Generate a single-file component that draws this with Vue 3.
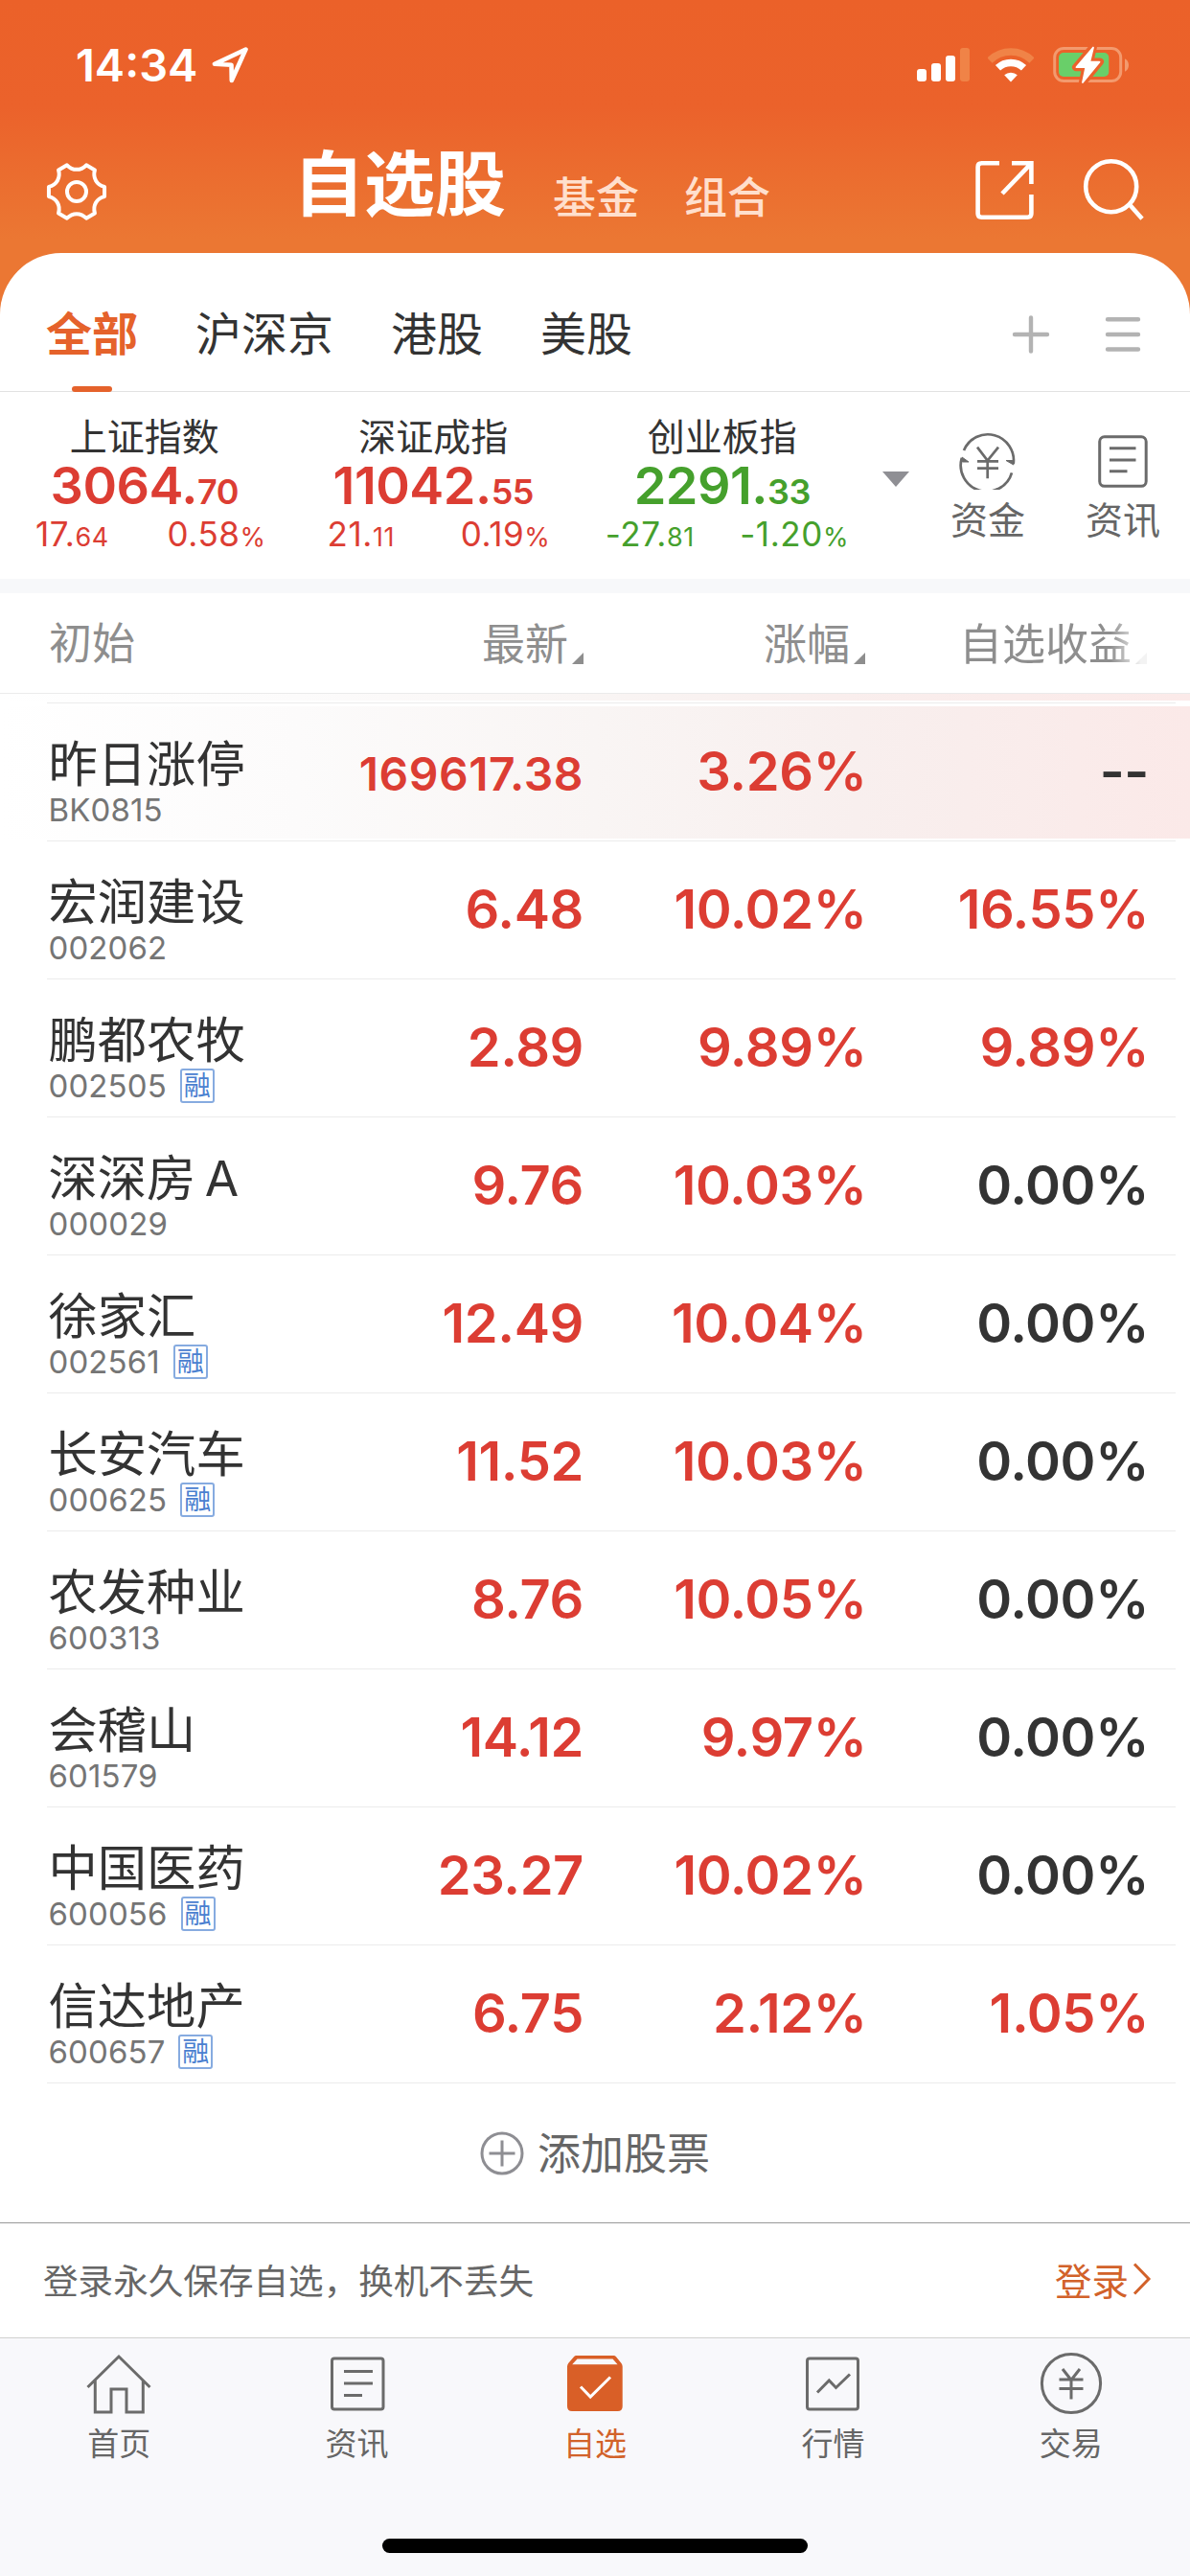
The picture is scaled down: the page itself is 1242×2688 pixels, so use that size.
<script setup>
const markets = ['全部', '沪深京', '港股', '美股']

const indices = [
  { name: '上证指数', int: '3064.', dec: '70', chg: '17.', chgDec: '64', pct: '0.58', tone: 'up' },
  { name: '深证成指', int: '11042.', dec: '55', chg: '21.', chgDec: '11', pct: '0.19', tone: 'up' },
  { name: '创业板指', int: '2291.', dec: '33', chg: '-27.', chgDec: '81', pct: '-1.20', tone: 'down' },
]

const stocks = [
  { name: '昨日涨停', code: 'BK0815', price: '169617.38', pct: '3.26%', gain: '--', hot: true },
  { name: '宏润建设', code: '002062', price: '6.48', pct: '10.02%', gain: '16.55%' },
  { name: '鹏都农牧', code: '002505', margin: true, price: '2.89', pct: '9.89%', gain: '9.89%' },
  { name: '深深房 A', code: '000029', price: '9.76', pct: '10.03%', gain: '0.00%' },
  { name: '徐家汇', code: '002561', margin: true, price: '12.49', pct: '10.04%', gain: '0.00%' },
  { name: '长安汽车', code: '000625', margin: true, price: '11.52', pct: '10.03%', gain: '0.00%' },
  { name: '农发种业', code: '600313', price: '8.76', pct: '10.05%', gain: '0.00%' },
  { name: '会稽山', code: '601579', price: '14.12', pct: '9.97%', gain: '0.00%' },
  { name: '中国医药', code: '600056', margin: true, price: '23.27', pct: '10.02%', gain: '0.00%' },
  { name: '信达地产', code: '600657', margin: true, price: '6.75', pct: '2.12%', gain: '1.05%' },
]

const isFlat = (v) => v === '--' || v === '0.00%'

// Six-toothed gear outline: two rim points per tooth, a concave curve between teeth.
const polar = (deg, r) => {
  const a = (deg * Math.PI) / 180
  return `${(33 + r * Math.cos(a)).toFixed(2)} ${(33 + r * Math.sin(a)).toFixed(2)}`
}
let gear = `M${polar(-10, 29.5)}`
for (let t = 0; t < 360; t += 60) {
  gear += `L${polar(t + 10, 29.5)}C${polar(t + 19, 22)} ${polar(t + 41, 22)} ${polar(t + 50, 29.5)}`
}
gear += 'Z'
</script>

<template>
  <div class="screen">
    <header class="top">
      <div class="status">
        <span class="time">14:34</span>
        <svg class="loc" width="44" height="44" viewBox="0 0 44 44" fill="none" stroke="#fff" stroke-width="4.6" stroke-linejoin="round">
          <path d="M37.5 5.500L5 20.800L22.500 21.800L22.800 38Z" />
        </svg>
        <svg class="signal" width="56" height="36" viewBox="0 0 56 36" fill="#fff">
          <rect x="0" y="22" width="10" height="13" rx="3" />
          <rect x="15" y="16" width="10" height="19" rx="3" />
          <rect x="30" y="8" width="10" height="27" rx="3" />
          <rect x="45" y="0" width="10" height="35" rx="3" fill="#f08347" />
        </svg>
        <svg class="wifi" width="48" height="36" viewBox="0 0 48 36" fill="none" stroke-width="7.500">
          <path d="M2 13A31.200 31.200 0 0 1 46 13" stroke="#f08347" />
          <path d="M10.500 20.800A19.600 19.600 0 0 1 37.500 20.800" stroke="#fff" />
          <path d="M24 35.500L17.200 28.300A10 10 0 0 1 30.800 28.300Z" fill="#fff" />
        </svg>
        <svg class="battery" width="80" height="44" viewBox="0 0 80 44">
          <rect x="1.700" y="4.500" width="69" height="34" rx="9.500" fill="none" stroke="#f39a6e" stroke-width="3" />
          <path d="M75 15.200Q79 17.500 79 22T75 28.700Z" fill="#f39a6e" />
          <rect x="6" y="9" width="52.300" height="25" rx="5" fill="#69cf69" />
          <path d="M42 2.800L24 24.200H34.300L30.800 40.500L49 18.400H38.300Z" fill="#eb622b" stroke="#eb622b" stroke-width="8" stroke-linejoin="round" />
          <path d="M42 3.500L24.500 24.200H34.300L31 40L48.500 18.600H38.300Z" fill="#fff" stroke="#fff" stroke-width="1.800" stroke-linejoin="round" />
        </svg>
      </div>
      <nav class="nav">
        <svg class="gear" width="66" height="66" viewBox="0 0 66 66" fill="none" stroke="#fff" stroke-width="4" stroke-linejoin="round">
          <path :d="gear" />
          <circle cx="33" cy="33" r="10" />
        </svg>
        <h1 class="title">自选股</h1>
        <span class="sub">基金</span>
        <span class="sub">组合</span>
        <svg class="export" width="62" height="62" viewBox="0 0 62 62" fill="none" stroke="#fff" stroke-width="4.600">
          <path d="M25 3.300H6.500Q2.600 3.300 2.600 7.200V55.800Q2.600 59.700 6.500 59.700H54.500Q58.400 59.700 58.400 55.800V36M38 3.300H58.400V25M58.400 3.300L28 35" />
        </svg>
        <svg class="search" width="64" height="66" viewBox="0 0 64 66" fill="none" stroke="#fff" stroke-width="4.600">
          <circle cx="29.700" cy="29.700" r="26.500" />
          <path d="M48.500 48L62 63.200" />
        </svg>
      </nav>
    </header>

    <main class="card">
      <div class="tabs">
        <span v-for="(m, i) in markets" :key="m" class="tab" :class="{ active: i === 0 }">{{ m }}</span>
        <svg class="tools" width="136" height="42" viewBox="0 0 136 42" stroke="#b3b3b3" stroke-width="4.400" stroke-linecap="round">
          <path d="M4 21H38M21 3.500V38.500M101 5.200H133M101 21H133M101 36.500H133" />
        </svg>
      </div>

      <section class="indices">
        <div v-for="x in indices" :key="x.name" class="index" :class="x.tone">
          <div class="iname">{{ x.name }}</div>
          <div class="ivalue">{{ x.int }}<small>{{ x.dec }}</small></div>
          <div class="ichange">
            <span>{{ x.chg }}<small>{{ x.chgDec }}</small></span>
            <span>{{ x.pct }}<small>%</small></span>
          </div>
        </div>
        <svg class="caret" width="28" height="16" viewBox="0 0 28 16" fill="#8f8f94"><path d="M0 0H28L14 16Z" /></svg>
        <div class="quick funds">
          <svg width="60" height="60" viewBox="0 0 60 60" fill="none" stroke="#6b6b6b" stroke-width="2.700">
            <path d="M5 19A27 27 0 0 1 56.700 33M2.800 27A27 27 0 0 0 55 42.300" />
            <path d="M3 26L10 31H3.500ZM56.800 34L49 29.500H56.500Z" fill="#6b6b6b" stroke-width="1" />
            <path d="M19 15.700L29.700 29.500L41 15.700M29.700 29V48.300M19 30.300H41M19 37.700H41" />
          </svg>
          <span>资金</span>
        </div>
        <div class="quick">
          <svg width="60" height="60" viewBox="0 0 60 60" fill="none" stroke="#6b6b6b" stroke-width="3">
            <rect x="5.700" y="4.800" width="48.500" height="51.500" rx="5" />
            <path d="M16 16.700H43.500M16 29H43.500M16 40.700H34.500" />
          </svg>
          <span>资讯</span>
        </div>
      </section>

      <div class="band"></div>

      <div class="thead">
        <span class="first">初始</span>
        <span class="col">最新<i></i></span>
        <span class="col">涨幅<i></i></span>
        <span class="col fade">自选收益<i></i></span>
      </div>

      <div class="peek"><div class="peek-line"></div></div>

      <ul class="list">
        <li v-for="s in stocks" :key="s.code" :class="{ hot: s.hot }">
          <div class="row">
            <div class="who">
              <div class="name">{{ s.name }}</div>
              <div class="code">{{ s.code }}<b v-if="s.margin" class="badge">融</b></div>
            </div>
            <div class="num" :class="{ long: s.price.length > 7 }">{{ s.price }}</div>
            <div class="num">{{ s.pct }}</div>
            <div class="num" :class="{ flat: isFlat(s.gain) }">{{ s.gain }}</div>
          </div>
        </li>
      </ul>

      <div class="add">
        <svg width="46" height="46" viewBox="0 0 46 46" fill="none" stroke="#8e8e93" stroke-width="3">
          <circle cx="23" cy="23" r="21" />
          <path d="M9.500 23H36.500M23 9.500V36.500" />
        </svg>
        <span>添加股票</span>
      </div>
    </main>

    <div class="login">
      <span>登录永久保存自选，换机不丢失</span>
      <a>登录<svg width="20" height="34" viewBox="0 0 20 34" fill="none" stroke="#d2622a" stroke-width="3"><path d="M2 1.500L17 17L2 32.500" /></svg></a>
    </div>

    <footer class="bar">
      <div class="item">
        <svg width="72" height="66" viewBox="0 0 72 66" fill="none" stroke="#6b6b6b" stroke-width="3">
          <path d="M3.500 37L36 5L68.500 37M11.300 30V63H28V39H44V63H61.300V30" />
        </svg>
        <span>首页</span>
      </div>
      <div class="item">
        <svg width="72" height="66" viewBox="0 0 72 66" fill="none" stroke="#6b6b6b" stroke-width="3">
          <rect x="9.500" y="7" width="53.500" height="53" rx="2.500" />
          <path d="M22 20.500H52M22 33H52M22 45.500H41" />
        </svg>
        <span>资讯</span>
      </div>
      <div class="item on">
        <svg width="72" height="66" viewBox="0 0 72 66">
          <path d="M16.500 4H55.500Q57 4 58 5.200L63.500 12Q64.700 13.500 64.700 15.500V57Q64.700 62 59.700 62H12Q7 62 7 57V15.500Q7 13.500 8.200 12L14 5.200Q15 4 16.500 4Z" fill="#d95f27" />
          <path d="M17.500 7.500H54.500L59.500 13.300H12.200Z" fill="#f8f8fb" />
          <path d="M21 36.500L31.200 47L52 26.500" fill="none" stroke="#fff" stroke-width="3" />
        </svg>
        <span>自选</span>
      </div>
      <div class="item">
        <svg width="72" height="66" viewBox="0 0 72 66" fill="none" stroke="#6b6b6b" stroke-width="3">
          <rect x="9.500" y="7" width="53" height="53" rx="2.500" />
          <path d="M20 42.500L32.300 30L39.500 37.500L54 23.500" />
        </svg>
        <span>行情</span>
      </div>
      <div class="item">
        <svg width="72" height="66" viewBox="0 0 72 66" fill="none" stroke="#6b6b6b" stroke-width="3">
          <circle cx="36" cy="33" r="30.600" />
          <path d="M27 18L36 29.500L45 18M36 29V49.500M23.500 29H48.500M23.500 38.500H48.500" />
        </svg>
        <span>交易</span>
      </div>
      <div class="home-indicator"></div>
    </footer>
  </div>
</template>

<style>
body { background: #fff; }
</style>

<style scoped>
.screen {
  width: 1242px;
  height: 2688px;
  overflow: hidden;
  display: flex;
  flex-direction: column;
  font-family: Inter, "Noto Sans CJK SC", sans-serif;
  color: #333;
  background: #fff;
}
svg { display: block; flex: none; }
.top {
  height: 330px;
  margin-bottom: -66px;
  flex: none;
  background: linear-gradient(#eb6129 0, #eb622b 112px, #eb7733 250px);
}
.status { height: 136px; display: flex; align-items: center; }
.time {
  width: 140px;
  margin-left: 79px;
  font-size: 47px;
  font-weight: 600;
  line-height: 60px;
  color: #fff;
}
.signal { margin-left: 694px; }
.wifi { margin-left: 18px; }
.battery { margin-left: 20px; }
.nav { height: 128px; display: flex; align-items: center; color: #fff; }
.gear { margin-left: 47px; }
.title {
  width: 264px;
  margin: 0 0 16px 193px;
  font-size: 74px;
  font-weight: 700;
  line-height: 80px;
}
.sub {
  width: 137px;
  margin-top: 14px;
  margin-left: 7px;
  margin-right: -7px;
  font-size: 45px;
  font-weight: 500;
  line-height: 50px;
  color: #ffdfcd;
}
.export { margin-left: 174px; margin-bottom: 4px; }
.search { margin-left: 50px; margin-bottom: 4px; }

.card {
  height: 2055px;
  flex: none;
  background: #fff;
  border-radius: 64px 64px 0 0;
}
.tabs {
  height: 144px;
  display: flex;
  align-items: center;
  padding-left: 48px;
  border-bottom: 1px solid #e2e2e2;
}
.tab {
  position: relative;
  height: 144px;
  line-height: 170px;
  margin-right: 60px;
  font-size: 48px;
}
.tab.active { color: #e5622b; font-weight: 700; }
.tab.active::after {
  content: "";
  position: absolute;
  left: 27px;
  bottom: -1px;
  width: 42px;
  height: 6px;
  border-radius: 3px;
  background: #e5622b;
}
.tools { margin: 25px 51px 0 auto; }

.indices { height: 195px; display: flex; }
.index { width: 301.500px; flex: none; text-align: center; }
.iname { margin-top: 27px; line-height: 40px; font-size: 39px; }
.ivalue {
  margin-top: 4px;
  font-size: 54px;
  font-weight: 600;
  line-height: 54px;
  letter-spacing: -0.5px;
}
.ivalue small { font-size: 36px; }
.ichange {
  display: flex;
  margin-top: -3px;
  font-size: 35px;
  line-height: 40px;
  letter-spacing: 0.600px;
}
.ichange span { flex: 1; }
.ichange small { font-size: 27px; }
.up .ivalue, .up .ichange { color: #dc3d33; }
.down .ivalue, .down .ichange { color: #45a02c; }
.caret { margin: 83px 0 0 16px; }
.quick {
  width: 78px;
  margin-left: 63px;
  margin-top: 42px;
  display: flex;
  flex-direction: column;
  align-items: center;
  font-size: 39px;
  line-height: 40px;
  color: #666;
}
.quick.funds { margin-left: 43.500px; }
.quick span { margin-top: 12px; }

.band { height: 15px; background: #f7f8fa; }

.thead {
  height: 104px;
  display: grid;
  grid-template-columns: 300px 309px 294px 294px;
  align-items: center;
  font-size: 45px;
  line-height: 50px;
  color: #8e8e8e;
  border-bottom: 1px solid #ebebeb;
}
.first { padding-left: 51px; margin-top: 1px; }
.col { display: flex; justify-content: flex-end; align-items: flex-end; margin-top: 4px; }
.col i {
  width: 12px;
  height: 12px;
  margin: 0 0 5px 4px;
  background: #8e8e8e;
  clip-path: polygon(100% 0, 100% 100%, 0 100%);
}
.fade {
  -webkit-mask-image: linear-gradient(90deg, #000 87%, rgba(0, 0, 0, 0.100) 98%);
  mask-image: linear-gradient(90deg, #000 87%, rgba(0, 0, 0, 0.100) 98%);
}

.peek {
  height: 10px;
  display: flex;
  align-items: flex-end;
  background: linear-gradient(90deg, #fff 0, #fcfbfb 25%, #f9f5f4 50%, #f9eeed 70%, #fbeae9 100%) 0 0 / 100% 7px no-repeat;
}
.peek-line { width: 1178px; height: 1px; margin-left: 49px; background: #ebebeb; }

.list { margin: 0; padding: 0; list-style: none; }
.hot { background: linear-gradient(90deg, #fff 0, #fcfbfb 25%, #f9f5f4 50%, #f8efee 72%, #fbe9e8 100%) 0 3px / 100% 138px no-repeat; }
.row {
  height: 143px;
  margin: 0 15px 0 49px;
  border-bottom: 1px solid #ebebeb;
  display: grid;
  grid-template-columns: 251px 309px 295.500px 294.500px;
  align-items: center;
}
.who { align-self: start; padding: 37px 0 0 1.500px; white-space: nowrap; }
.name { font-size: 51.300px; line-height: 52px; word-spacing: -5px; }
.code {
  display: flex;
  align-items: center;
  height: 36px;
  margin-top: 4px;
  font-size: 33px;
  letter-spacing: 0.100px;
  color: #757575;
}
.badge {
  box-sizing: border-box;
  width: 36px;
  height: 36px;
  margin-left: 14px;
  border: 2px solid #86abe0;
  border-radius: 3px;
  font-size: 28px;
  font-weight: 400;
  line-height: 32px;
  text-align: center;
  color: #4a80d0;
}
.num {
  font-size: 56px;
  font-weight: 600;
  line-height: 60px;
  letter-spacing: -0.400px;
  text-align: right;
  margin-top: -2px;
  color: #dc3d33;
}
.num.long { font-size: 48px; letter-spacing: 0.500px; margin-top: 4px; }
.num.flat { color: #333; }

.add {
  height: 146px;
  display: flex;
  align-items: center;
  justify-content: center;
  gap: 14px;
  font-size: 45px;
  line-height: 50px;
  color: #666;
}
.add span { margin-top: 2px; }

.login {
  height: 119px;
  box-sizing: border-box;
  flex: none;
  display: flex;
  align-items: center;
  justify-content: space-between;
  padding: 0 40px 2px 45px;
  border-top: 1px solid #999;
  font-size: 36.600px;
  color: #666;
}
.login a { display: flex; align-items: center; gap: 4px; font-size: 38.500px; color: #d2622a; }

.bar {
  position: relative;
  flex: 1;
  display: flex;
  margin-top: 1px;
  border-top: 1px solid #d0d0d0;
  background: #f8f8fb;
}
.item {
  flex: 1;
  display: flex;
  flex-direction: column;
  align-items: center;
  padding-top: 14px;
  font-size: 33px;
  line-height: 36px;
  color: #666;
}
.item span { margin-top: 12px; }
.item.on { color: #d2622a; }
.home-indicator {
  position: absolute;
  left: 399px;
  bottom: 24px;
  width: 444px;
  height: 15px;
  border-radius: 8px;
  background: #000;
}
</style>
